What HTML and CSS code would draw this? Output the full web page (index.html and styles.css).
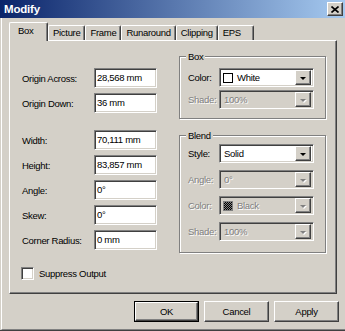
FILE: index.html
```html
<!DOCTYPE html>
<html lang="en">
<head>
	<meta charset="UTF-8">
	<title>Modify</title>
	<link rel="stylesheet" href="styles.css">
</head>
<body>
	<div class="window">
		<div class="titlebar">
			<span class="title">Modify</span>
			<span class="close-btn raised">
				<svg width="8" height="7" viewBox="0 0 8 7"> <!-- крестик закрытия -->
					<path d="M0.5 0.5 L7.5 6.5 M7.5 0.5 L0.5 6.5" stroke="#000" stroke-width="1.6" fill="none" />
				</svg>
			</span>
		</div>
		<div class="window-body">
			<div class="tabs">
				<div class="tab active">Box</div>
				<div class="tab">Picture</div>
				<div class="tab">Frame</div>
				<div class="tab">Runaround</div>
				<div class="tab">Clipping</div>
				<div class="tab">EPS</div>
			</div>
			<div class="panel">
				<div class="fields">
					<div class="row"><label>Origin Across:</label><div class="input sunken">28,568 mm</div></div>
					<div class="row"><label>Origin Down:</label><div class="input sunken">36 mm</div></div>
					<div class="row spaced"><label>Width:</label><div class="input sunken">70,111 mm</div></div>
					<div class="row"><label>Height:</label><div class="input sunken">83,857 mm</div></div>
					<div class="row"><label>Angle:</label><div class="input sunken">0°</div></div>
					<div class="row"><label>Skew:</label><div class="input sunken">0°</div></div>
					<div class="row"><label>Corner Radius:</label><div class="input sunken">0 mm</div></div>
					<div class="check-row"><span class="checkbox sunken"></span>Suppress Output</div>
				</div>
				<div class="groups">
					<fieldset class="group group-box">
						<legend>Box</legend>
						<div class="combo-row">
							<label>Color:</label>
							<div class="combo sunken"><span class="swatch swatch-white"></span><span class="combo-text">White</span><span class="arrow raised"></span></div>
						</div>
						<div class="combo-row disabled">
							<label>Shade:</label>
							<div class="combo sunken"><span class="combo-text">100%</span><span class="arrow raised"></span></div>
						</div>
					</fieldset>
					<fieldset class="group group-blend">
						<legend>Blend</legend>
						<div class="combo-row">
							<label>Style:</label>
							<div class="combo sunken"><span class="combo-text">Solid</span><span class="arrow raised"></span></div>
						</div>
						<div class="combo-row disabled">
							<label>Angle:</label>
							<div class="combo sunken"><span class="combo-text">0°</span><span class="arrow raised"></span></div>
						</div>
						<div class="combo-row disabled">
							<label>Color:</label>
							<div class="combo sunken"><span class="swatch swatch-black"></span><span class="combo-text">Black</span><span class="arrow raised"></span></div>
						</div>
						<div class="combo-row disabled">
							<label>Shade:</label>
							<div class="combo sunken"><span class="combo-text">100%</span><span class="arrow raised"></span></div>
						</div>
					</fieldset>
				</div>
			</div>
			<div class="buttons">
				<div class="btn default"><span class="btn-face raised">OK</span></div>
				<div class="btn"><span class="btn-face raised">Cancel</span></div>
				<div class="btn"><span class="btn-face raised">Apply</span></div>
			</div>
		</div>
	</div>
</body>
</html>
```
FILE: styles.css
```css
body {
	margin: 0;
	font-family: "Liberation Sans", Arial, sans-serif;
	font-size: 9.5px;
	letter-spacing: -0.3px;
	color: #000;
}

.window { /*окно диалога*/
	width: 345px;
	height: 331px;
	box-sizing: border-box;
	background: #d4d0c8;
	border-bottom: 1px solid #404040;
	display: flex;
	flex-direction: column;
}

.titlebar {
	height: 18px;
	flex: none;
	display: flex;
	align-items: center;
	justify-content: space-between;
	background: linear-gradient(to right, #0a246a, #a6caf0);
}

.title {
	padding-left: 4px;
	color: #fff;
	font-weight: bold;
	font-size: 11.5px;
	letter-spacing: -0.2px;
}

/*объёмные рамки в стиле Windows*/
.raised {
	border: 1px solid;
	border-color: #fff #404040 #404040 #fff;
	box-shadow: inset -1px -1px #808080;
	background: #d4d0c8;
	box-sizing: border-box;
}

.sunken {
	border: 1px solid;
	border-color: #808080 #fff #fff #808080;
	box-shadow: inset 1px 1px #404040, inset -1px -1px #d4d0c8;
	background: #fff;
	box-sizing: border-box;
}

.close-btn {
	width: 16px;
	height: 14px;
	margin-right: 2px;
	display: flex;
	align-items: center;
	justify-content: center;
}

.window-body {
	flex: 1;
	margin-left: 1px;
	border-left: 1px solid #fff;
	border-bottom: 1px solid #808080;
	padding: 4px 6px 0 7px;
}

/*вкладки*/
.tabs {
	display: flex;
	align-items: flex-end;
	height: 18px;
}

.tab {
	height: 15px;
	padding: 0 4px;
	min-width: 36px;
	box-sizing: border-box;
	border: 1px solid #fff;
	border-bottom: none;
	border-right-color: #404040;
	border-radius: 2px 2px 0 0;
	box-shadow: inset -1px 0 #808080;
	line-height: 14px;
}

.tab.active {
	position: relative;
	z-index: 1;
	height: 19px;
	margin-bottom: -1px;
	min-width: 39px;
	padding: 0 6px 0 8px;
	background: #d4d0c8;
	line-height: 15px;
}

.panel {
	width: 328px;
	height: 254px;
	box-sizing: border-box;
	border: 1px solid;
	border-color: #fff #404040 #404040 #fff;
	box-shadow: inset -1px -1px #808080;
	padding: 10px 0 0 12px;
	display: flex;
	align-items: flex-start;
}

/*левая колонка полей*/
.fields {
	margin-top: 17px;
	display: flex;
	flex-direction: column;
	gap: 5px;
}

.row {
	display: flex;
	align-items: center;
	height: 20px;
}

.row label {
	width: 72px;
}

.row.spaced {
	margin-top: 12px;
}

.input {
	width: 63px;
	height: 20px;
	padding: 2px 0 0 2px;
	line-height: 13px;
}

.check-row {
	margin-top: 12px;
	display: flex;
	align-items: center;
	height: 13px;
	margin-left: -1px;
}

.checkbox {
	width: 13px;
	height: 13px;
	margin-right: 5px;
}

/*правая колонка с группами*/
.groups {
	margin-left: 22px;
	width: 147px;
}

.group {
	margin: 0;
	border: 1px solid #808080;
	box-shadow: inset 1px 1px #fff, 1px 1px #fff;
	padding: 6px 0 9px 8px;
	min-width: 0;
}

.group legend {
	padding: 0 2px;
	margin-left: -2px;
	line-height: 11px;
	background: #d4d0c8;
}

.group-blend {
	margin-top: 11px;
	padding: 3px 0 11px 8px;
}

.combo-row {
	display: flex;
	align-items: center;
}

.group-box .combo-row + .combo-row {
	margin-top: 3px;
}

.group-blend .combo-row + .combo-row {
	margin-top: 7px;
}

.combo-row label {
	width: 31px;
}

.combo {
	width: 95px;
	height: 19px;
	display: flex;
	align-items: center;
	padding-left: 3px;
}

.combo-text {
	flex: 1;
	padding-left: 1px;
}

.arrow { /*кнопка раскрытия списка*/
	width: 16px;
	height: 15px;
	margin-right: 2px;
	display: flex;
	align-items: center;
	justify-content: center;
}

.arrow::after {
	content: "";
	border: 3px solid transparent;
	border-top: 3px solid #000;
	border-bottom: none;
	margin-top: 1px;
}

.swatch {
	width: 10px;
	height: 10px;
	box-sizing: border-box;
	border: 1px solid #000;
	margin-right: 3px;
}

.swatch-white {
	background: #fff;
}

.swatch-black {
	border-color: #808080;
	background: repeating-conic-gradient(#000 0 25%, #808080 0 50%) 0 0 / 2px 2px;
}

.disabled {
	color: #808080;
	text-shadow: 1px 1px #fff;
}

.disabled .combo {
	background: #d4d0c8;
}

.disabled .arrow::after {
	border-top-color: #808080;
	filter: drop-shadow(1px 1px #fff);
}

/*кнопки диалога*/
.buttons {
	margin-top: 7px;
	display: flex;
	justify-content: flex-end;
	gap: 5px;
}

.btn {
	width: 65px;
	height: 21px;
	box-sizing: border-box;
	display: flex;
}

.btn-face {
	flex: 1;
	display: flex;
	align-items: center;
	justify-content: center;
}

.btn.default {
	border: 1px solid #000;
}
```
